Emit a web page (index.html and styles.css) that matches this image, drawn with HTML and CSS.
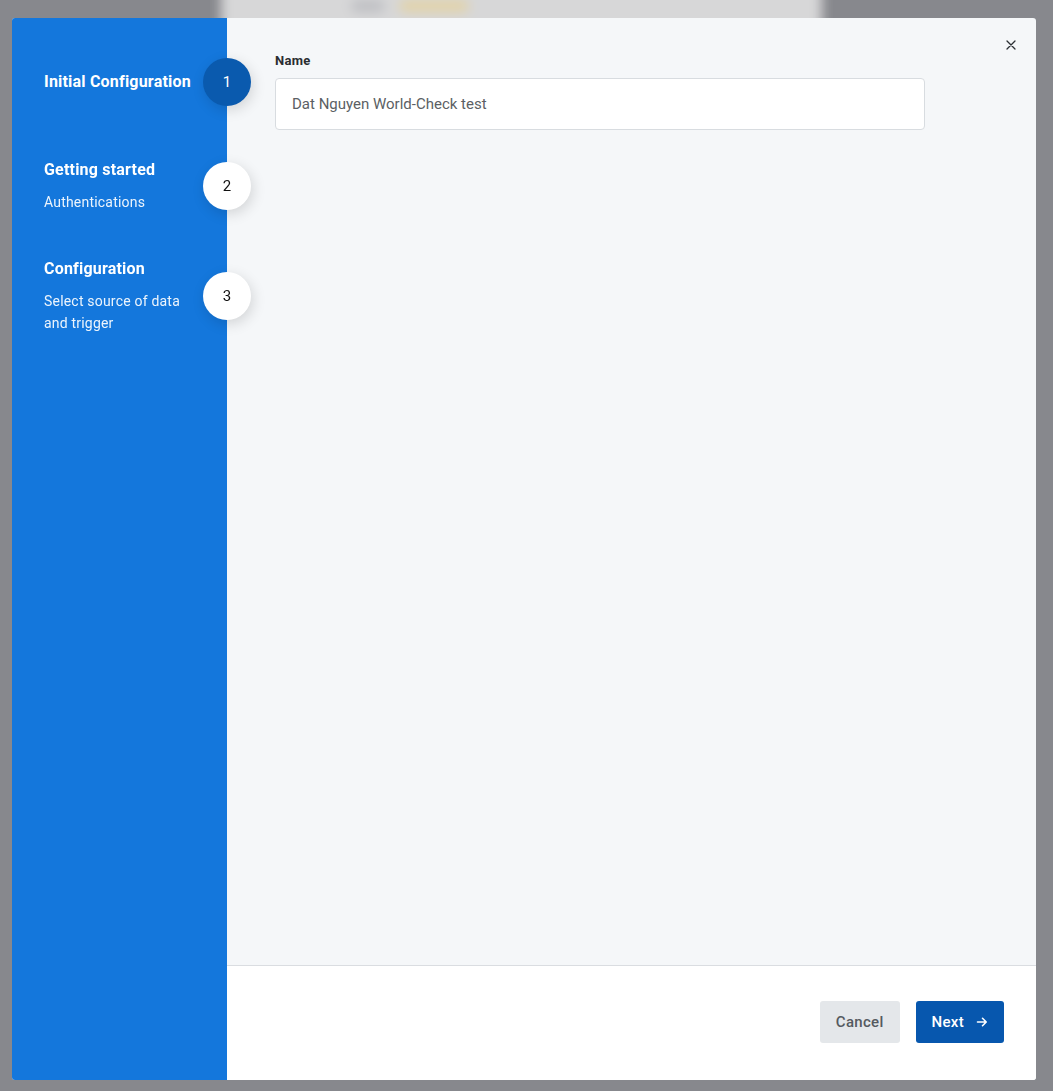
FILE: index.html
```html
<!DOCTYPE html>
<html lang="en">
<head>
    <meta charset="UTF-8">
    <meta name="viewport" content="width=device-width, initial-scale=1.0">
    <title>Initial Configuration</title>
    <link rel="stylesheet" href="styles.css">
</head>
<body>

    <!-- page behind the dialog, blurred by the overlay -->
    <div class="backdrop">
        <div class="backdrop-card">
            <span class="blob grey"></span>
            <span class="blob yellow"></span>
        </div>
    </div>

    <div class="modal">
        <button class="close" aria-label="Close">
            <svg width="10" height="10" viewBox="0 0 10 10">
                <path d="M1 1L9 9M9 1L1 9" stroke="#2b2f33" stroke-width="1.3" stroke-linecap="round"/>
            </svg>
        </button>

        <!-- Steps -->
        <aside class="sidebar">
            <div class="step step-first">
                <div class="step-text">
                    <div class="step-title">Initial Configuration</div>
                </div>
                <span class="step-num active">1</span>
            </div>
            <div class="step">
                <div class="step-text">
                    <div class="step-title">Getting started</div>
                    <div class="step-sub">Authentications</div>
                </div>
                <span class="step-num">2</span>
            </div>
            <div class="step">
                <div class="step-text">
                    <div class="step-title">Configuration</div>
                    <div class="step-sub">Select source of data<br>and trigger</div>
                </div>
                <span class="step-num">3</span>
            </div>
        </aside>

        <div class="content">
            <div class="form">
                <label class="label" for="name">Name</label>
                <input class="input" id="name" type="text" value="Dat Nguyen World-Check test">
            </div>

            <div class="footer">
                <button class="btn btn-cancel">Cancel</button>
                <button class="btn btn-next">
                    Next
                    <svg width="12" height="12" viewBox="0 0 12 12">
                        <path d="M1.5 6H10M6.5 2.3L10.2 6L6.5 9.7" fill="none" stroke="#fff" stroke-width="1.6" stroke-linecap="round" stroke-linejoin="round"/>
                    </svg>
                </button>
            </div>
        </div>
    </div>

</body>
</html>
```

FILE: styles.css
```css
* {
    box-sizing: border-box;
}

body {
    margin: 0;
    height: 100vh;
    font-family: Roboto, "Liberation Sans", Arial, sans-serif;
    background: #87888d;
    padding: 18px 17px 11px 12px;
    display: flex;
    overflow: hidden;
}

.backdrop {
    position: fixed;
    inset: 0;
    filter: blur(6px);
}

.backdrop-card {
    position: absolute;
    left: 221px;
    top: -20px;
    width: 601px;
    height: 60px;
    background: #d7d7d8;
}

.blob {
    position: absolute;
    top: 20px;
    height: 12px;
    border-radius: 6px;
}

.blob.grey {
    left: 130px;
    width: 34px;
    background: #bdbec2;
}

.blob.yellow {
    left: 178px;
    width: 70px;
    background: #e3d3a6;
}

.modal {
    position: relative;
    flex: 1;
    display: flex;
    border-radius: 3px;
    overflow: hidden;
    background: #f5f7f9;
}

.close {
    position: absolute;
    top: 22px;
    right: 20px;
    width: 10px;
    height: 10px;
    padding: 0;
    border: none;
    background: none;
    cursor: pointer;
    display: flex;
    z-index: 2;
}

/* Sidebar */

.sidebar {
    position: relative;
    z-index: 1;
    width: 215px;
    flex-shrink: 0;
    background: #1477dc;
    padding-top: 40px;
    display: flex;
    flex-direction: column;
    gap: 45px;
}

.step {
    position: relative;
    display: flex;
    align-items: center;
    min-height: 48px;
    padding-left: 32px;
    color: #fff;
}

.step-first {
    margin-bottom: 8px;
}

.step-title {
    font-size: 16px;
    font-weight: 700;
    letter-spacing: 0.2px;
    line-height: 22px;
}

.step-sub {
    margin-top: 10px;
    font-size: 14px;
    letter-spacing: 0.2px;
    line-height: 22px;
    color: rgba(255, 255, 255, 0.92);
}

.step-num {
    position: absolute;
    right: -24px;
    top: 50%;
    transform: translateY(-50%);
    width: 48px;
    height: 48px;
    border-radius: 50%;
    background: #fff;
    color: #111;
    font-size: 15px;
    display: flex;
    align-items: center;
    justify-content: center;
    box-shadow: 2px 4px 14px rgba(0, 0, 0, 0.14);
}

.step-num.active {
    background: #0a5aae;
    color: #fff;
}

/* Content */

.content {
    flex: 1;
    display: flex;
    flex-direction: column;
}

.form {
    flex: 1;
    padding: 35px 48px 0 48px;
}

.label {
    display: block;
    font-size: 13px;
    font-weight: 700;
    letter-spacing: 0.3px;
    line-height: 16px;
    color: #2a2d31;
    margin-bottom: 9px;
}

.input {
    display: block;
    width: 650px;
    height: 52px;
    padding: 0 16px;
    border: 1px solid #d8dce0;
    border-radius: 4px;
    background: #fff;
    font-family: inherit;
    font-size: 15px;
    color: #5b5f64;
}

.input:focus {
    outline: none;
    border-color: #1477dc;
}

.footer {
    height: 115px;
    background: #fff;
    border-top: 1px solid #dadde1;
    display: flex;
    justify-content: flex-end;
    align-items: center;
    gap: 16px;
    padding: 0 32px 2px 0;
}

.btn {
    height: 42px;
    padding: 0 16px;
    border: none;
    border-radius: 3px;
    font-family: inherit;
    font-size: 15px;
    font-weight: 500;
    letter-spacing: 0.3px;
    cursor: pointer;
    display: flex;
    align-items: center;
    gap: 12px;
}

.btn-cancel {
    background: #e4e7ea;
    color: #555a60;
}

.btn-next {
    background: #0757ae;
    color: #fff;
}
```
